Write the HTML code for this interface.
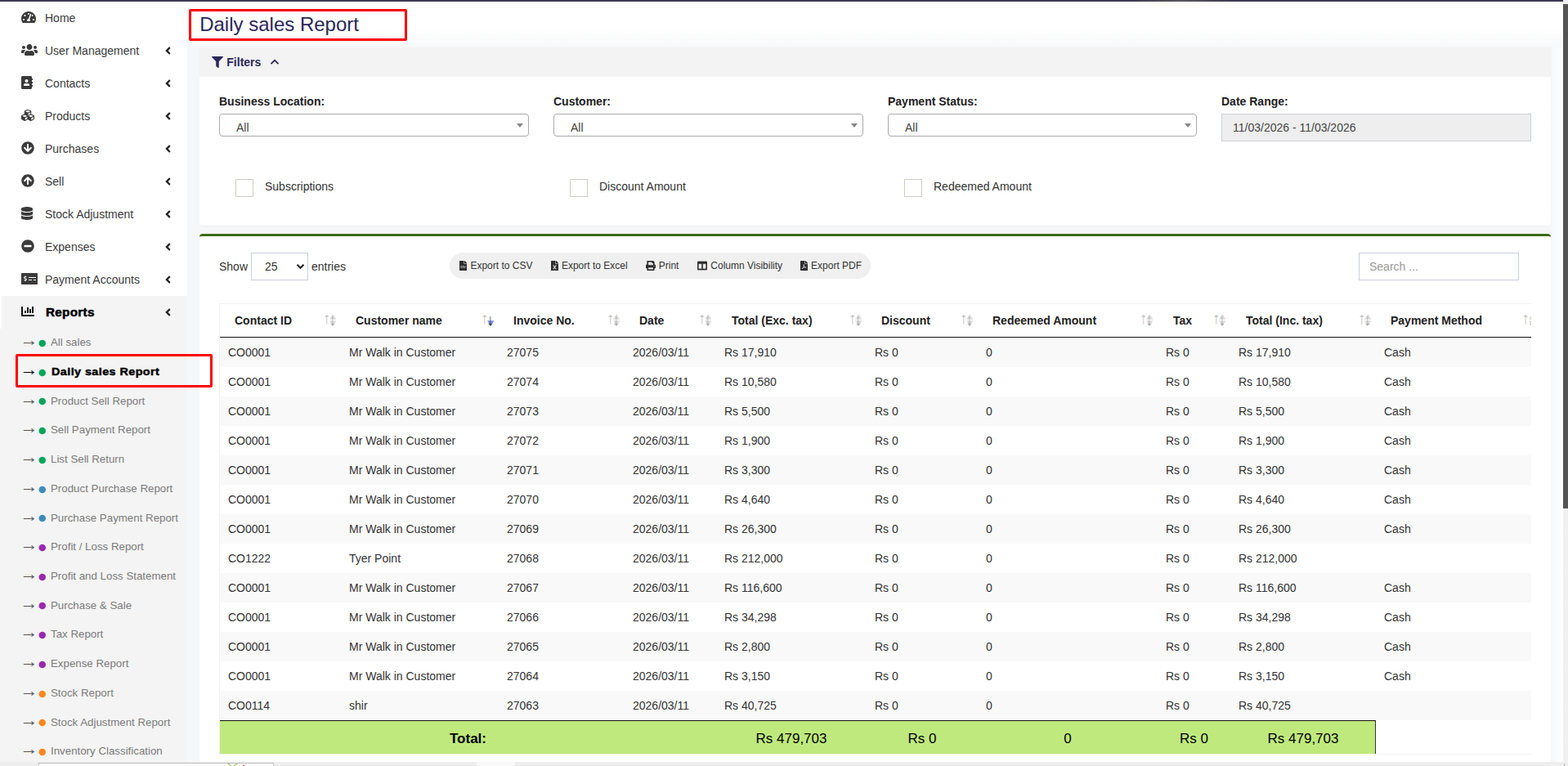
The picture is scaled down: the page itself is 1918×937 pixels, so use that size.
<!DOCTYPE html>
<html lang="en">
<head>
<meta charset="utf-8">
<title>Daily sales Report</title>
<style>
*{box-sizing:border-box}
html,body{margin:0;padding:0}
body{width:1918px;height:937px;overflow:hidden;position:relative;background:#f6f7f9;font-family:"Liberation Sans",Arial,sans-serif;font-size:14px;line-height:20px;color:#333}
.abs{position:absolute}
#topbar{left:0;top:0;width:1912px;height:2px;background:#3d3b50}
#glow{left:1385px;top:0;width:120px;height:12px;background:radial-gradient(ellipse at 50% 0,rgba(255,232,150,.16),rgba(255,240,170,0) 70%)}
#rgrad{left:1897px;top:58px;width:15px;height:875px;background:linear-gradient(90deg,#f6f7f9,#fff)}
#titlebg{left:229px;top:2px;width:1683px;height:56px;background:linear-gradient(#fff 0,#fff 60%,#f7f8fa 100%)}
#sbar{left:1912px;top:0;width:6px;height:933px;background:#f0f0f0}
#sthumb{left:1912px;top:5px;width:6px;height:617px;background:#555}
#bottom{left:0;top:932px;width:1918px;height:5px;background:#eee}
#bottombox{left:47px;top:933px;width:288px;height:4px;background:#fff;border:1px solid #bdbdbd;border-bottom:0;overflow:hidden}
#side{left:0;top:2px;width:229px;height:931px;background:#fff}
#subbg{left:0;top:402px;width:229px;height:531px;background:#f4f4f4}
#repbg{left:2px;top:362px;width:227px;height:40px;background:#f4f4f4}
.mi{left:0;width:229px;height:40px;line-height:40px;color:#3b3b3b;font-size:14px;white-space:nowrap}
.mi .t{position:absolute;left:55px;top:0}
.mi svg.ic{position:absolute;left:26px;top:11px;height:16px;fill:#3b3b3b}
.mi.b svg.ic{fill:#111}
.mi svg.ch{position:absolute;left:201.6px;top:12.6px;width:7px;height:14px;overflow:visible}
.mi.b .t{font-weight:bold;color:#000;left:56.3px;-webkit-text-stroke:.5px #000;letter-spacing:.3px;transform:scaleX(1.085);transform-origin:0 50%}
.si{left:0;width:229px;height:20px;line-height:20px;color:#7b7b7b;font-size:13.3px;white-space:nowrap}
.si .ar{position:absolute;left:24.5px;top:-2.7px;color:#555;font-size:22px;line-height:20px}
.si svg.dot{position:absolute;left:47px;top:6px;width:10px;height:10px}
.si .t{position:absolute;left:62px;top:.3px}
.si.b .t{font-weight:bold;color:#000;left:63.4px;-webkit-text-stroke:.45px #000;letter-spacing:.4px;transform:scaleX(1.08);transform-origin:0 50%}
.si.b .ar{color:#000}
#red1{left:231px;top:11px;width:267px;height:39px;border:3px solid #f00;border-radius:2px}
#red2{left:19px;top:433px;width:241px;height:41px;border:3px solid #f00;border-radius:2px}
#title{left:244.2px;top:14px;font-size:24px;line-height:32px;color:#2a2859;white-space:nowrap}
.box{background:#fff}
#fbox{left:244px;top:58px;width:1653px;height:218px;border-radius:0 0 4px 4px;box-shadow:0 1px 2px rgba(0,0,0,.04)}
#fhead{left:244px;top:58px;width:1653px;height:36px;background:#f3f3f3}
#ftitle{left:277.3px;top:66px;font-weight:bold;color:#2a2859;white-space:nowrap}
.lbl{font-weight:bold;color:#222;white-space:nowrap;top:114px}
.s2{top:139px;width:379px;height:28px;border:1px solid #aaa;border-radius:4px;background:#fff}
.s2 .t{position:absolute;left:20px;top:6px;color:#444;line-height:20px}
.s2 .a{position:absolute;right:6px;top:11px;width:0;height:0;border-left:4px solid transparent;border-right:4px solid transparent;border-top:5px solid #888}
#dr{left:1494px;top:139px;width:379px;height:34px;border:1px solid #ccd0d7;background:#eee;color:#444;padding:6px 13px;line-height:20px;white-space:nowrap}
.cb{top:219px;width:22px;height:22px;border:1px solid #d0cdc6;background:#fff}
.cbl{top:218px;color:#333;white-space:nowrap}
#tbox{left:244px;top:286px;width:1653px;height:660px;border-top:3px solid #3d6b17;border-radius:4px 4px 0 0}
#show{left:268px;top:316px;white-space:nowrap}
#sel{left:307px;top:309px;width:70px;height:34px;border:1px solid #c9cfdc;background:#fff}
#sel .t{position:absolute;left:16px;top:6px;color:#333}
#sel svg{position:absolute;left:54.2px;top:11px;width:11px;height:10px}
#entries{left:381px;top:316px;white-space:nowrap}
#btns{left:550px;top:309px;width:515px;height:32px;border-radius:16px;background:#f0f0f0}
.bt{top:317px;font-size:12px;line-height:16px;color:#333;white-space:nowrap}
.bt svg{position:absolute;top:1.5px;height:12px;fill:#2e2e2e;stroke:#2e2e2e;stroke-width:10}
#search{left:1662px;top:309px;width:196px;height:34px;border:1px solid #c9cfdc;background:#fff;color:#999;padding:6px 12px;line-height:20px}
#tbl{left:268px;top:371px;width:1605px;height:552px;overflow:hidden;border:1px solid #f2f2f2;border-width:1px 0 1px 1px}
#thline{left:269px;top:412px;width:1604px;height:1px;background:#111;box-shadow:0 1px 0 #fff}
.th{font-weight:bold;color:#222;white-space:nowrap}
.row{left:269px;width:1604px;height:36px}
.row.o{background:#f9f9f9}
.td{color:#333;white-space:nowrap;line-height:20px}
#foot{left:269px;top:881px;width:1414px;height:41px;background:#bfe97c;border-top:1px solid #111;border-right:1px solid #333}
.ft{top:894px;font-size:17px;line-height:20px;color:#000;white-space:nowrap;text-align:center}
.sa{font-size:20px;line-height:20px;color:#222;opacity:.28}
.sa.on{opacity:.8;color:#333}
</style>
</head>
<body>
<div class="abs" id="titlebg"></div>
<div class="abs" id="rgrad"></div>
<div class="abs" id="topbar"></div>
<div class="abs" id="glow"></div>
<div class="abs" id="side"></div>
<div class="abs" id="subbg"></div>
<div class="abs" id="repbg"></div>
<div class="abs mi" style="top:2px"><svg class="ic" style="width:18px" viewBox="0 0 576 512"><path d="M288 32C128.94 32 0 160.94 0 320c0 52.8 14.25 102.26 39.06 144.8 5.61 9.62 16.3 15.2 27.44 15.2h443c11.14 0 21.83-5.58 27.44-15.2C561.75 422.26 576 372.8 576 320c0-159.06-128.94-288-288-288zm0 64c14.71 0 26.58 10.13 30.32 23.65-1.11 2.26-2.64 4.23-3.45 6.67l-9.22 27.67c-5.13 3.49-10.97 6.01-17.64 6.01-17.67 0-32-14.33-32-32S270.33 96 288 96zM96 384c-17.67 0-32-14.33-32-32s14.33-32 32-32 32 14.33 32 32-14.33 32-32 32zm48-160c-17.67 0-32-14.33-32-32s14.33-32 32-32 32 14.33 32 32-14.33 32-32 32zm246.77-72.41l-61.33 184C343.13 347.33 352 364.54 352 384c0 11.72-3.38 22.55-8.88 32H232.88c-5.5-9.45-8.88-20.28-8.88-32 0-33.94 26.5-61.43 59.9-63.59l61.34-184.01c4.17-12.56 17.73-19.45 30.36-15.17 12.57 4.19 19.35 17.79 15.17 30.36zm14.66 57.2l15.52-46.55c3.47-1.29 7.13-2.23 11.05-2.23 17.67 0 32 14.33 32 32s-14.33 32-32 32c-11.38-.01-20.89-6.28-26.57-15.22zM480 384c-17.67 0-32-14.33-32-32s14.33-32 32-32 32 14.33 32 32-14.33 32-32 32z"/></svg><span class="t">Home</span></div>
<div class="abs mi" style="top:42px"><svg class="ic" style="width:20px" viewBox="0 0 640 512"><path d="M96 224c35.3 0 64-28.7 64-64s-28.7-64-64-64-64 28.7-64 64 28.7 64 64 64zm448 0c35.3 0 64-28.7 64-64s-28.7-64-64-64-64 28.7-64 64 28.7 64 64 64zm32 32h-64c-17.6 0-33.5 7.1-45.1 18.6 40.3 22.1 68.9 62 75.1 109.4h66c17.7 0 32-14.3 32-32v-32c0-35.3-28.7-64-64-64zm-256 0c61.9 0 112-50.1 112-112S381.9 32 320 32 208 82.1 208 144s50.1 112 112 112zm76.8 32h-8.3c-20.8 10-43.9 16-68.5 16s-47.6-6-68.5-16h-8.3C179.6 288 128 339.6 128 403.2V432c0 26.5 21.5 48 48 48h288c26.5 0 48-21.5 48-48v-28.8c0-63.6-51.6-115.2-115.2-115.2zm-223.700-13.400C161.5 263.1 145.6 256 128 256H64c-35.3 0-64 28.7-64 64v32c0 17.7 14.3 32 32 32h65.9c6.3-47.4 34.9-87.300 75.200-109.400z"/></svg><span class="t">User Management</span><svg class="ch" viewBox="0 0 256 512"><path d="M31.7 239l136-136c9.4-9.4 24.6-9.4 33.9 0l22.6 22.6c9.4 9.4 9.4 24.6 0 33.9L127.9 256l96.4 96.4c9.4 9.4 9.4 24.6 0 33.900L201.7 409c-9.400 9.4-24.6 9.4-33.900 0l-136-136c-9.500-9.400-9.500-24.600-.1-34z" fill="#222" stroke="#222" stroke-width="8"/></svg></div>
<div class="abs mi" style="top:82px"><svg class="ic" style="width:14px" viewBox="0 0 448 512"><path d="M436 160c6.6 0 12-5.4 12-12v-40c0-6.6-5.4-12-12-12h-20V48c0-26.5-21.5-48-48-48H48C21.5 0 0 21.5 0 48v416c0 26.5 21.5 48 48 48h320c26.5 0 48-21.5 48-48v-48h20c6.6 0 12-5.4 12-12v-40c0-6.6-5.4-12-12-12h-20v-64h20c6.6 0 12-5.4 12-12v-40c0-6.6-5.4-12-12-12h-20v-64h20zm-228-32c35.3 0 64 28.7 64 64s-28.7 64-64 64-64-28.7-64-64 28.7-64 64-64zm112 236.800c0 10.6-10 19.2-22.4 19.200H118.400C106 384 96 375.400 96 364.800v-19.200c0-31.800 30.100-57.600 67.200-57.600h5c12.300 5.100 25.700 8 39.800 8s27.600-2.900 39.800-8h5c37.100 0 67.200 25.800 67.200 57.600v19.200z"/></svg><span class="t">Contacts</span><svg class="ch" viewBox="0 0 256 512"><path d="M31.7 239l136-136c9.4-9.4 24.6-9.4 33.9 0l22.6 22.6c9.4 9.4 9.4 24.6 0 33.9L127.9 256l96.4 96.4c9.4 9.4 9.4 24.6 0 33.900L201.7 409c-9.400 9.4-24.6 9.4-33.900 0l-136-136c-9.500-9.400-9.500-24.600-.1-34z" fill="#222" stroke="#222" stroke-width="8"/></svg></div>
<div class="abs mi" style="top:122px"><svg class="ic" style="width:16px" viewBox="0 0 512 512"><path d="M488.6 250.200L392 214V105.500c0-15-9.300-28.400-23.400-33.700l-100-37.500c-8.100-3.100-17.100-3.100-25.300 0l-100 37.500c-14.100 5.300-23.400 18.700-23.400 33.700V214l-96.600 36.200C9.300 255.500 0 268.900 0 283.900V394c0 13.600 7.700 26.100 19.900 32.200l100 50c10.100 5.100 22.100 5.100 32.200 0l103.900-52 103.900 52c10.100 5.100 22.100 5.100 32.200 0l100-50c12.200-6.100 19.900-18.600 19.900-32.200V283.900c0-15-9.300-28.400-23.400-33.700zM358 214.800l-85 31.900v-68.200l85-37v73.300zM154 104.100l102-38.200 102 38.200v.6l-102 41.400-102-41.400v-.6zm84 291.100l-85 42.500v-79.100l85-38.800v75.400zm0-112l-102 41.400-102-41.400v-.6l102-38.200 102 38.200v.6zm240 112l-85 42.500v-79.100l85-38.800v75.400zm0-112l-102 41.400-102-41.400v-.6l102-38.200 102 38.200v.6z"/></svg><span class="t">Products</span><svg class="ch" viewBox="0 0 256 512"><path d="M31.7 239l136-136c9.4-9.4 24.6-9.4 33.9 0l22.6 22.6c9.4 9.4 9.4 24.6 0 33.9L127.9 256l96.4 96.4c9.4 9.4 9.4 24.6 0 33.900L201.7 409c-9.400 9.4-24.6 9.4-33.900 0l-136-136c-9.500-9.400-9.500-24.600-.1-34z" fill="#222" stroke="#222" stroke-width="8"/></svg></div>
<div class="abs mi" style="top:162px"><svg class="ic" style="width:16px" viewBox="0 0 512 512"><path d="M504 256c0 137-111 248-248 248S8 393 8 256 119 8 256 8s248 111 248 248zm-143.600-28.900L288 302.600V120c0-13.300-10.700-24-24-24h-16c-13.300 0-24 10.700-24 24v182.600l-72.400-75.500c-9.300-9.700-24.800-9.900-34.300-.4l-10.900 11c-9.400 9.400-9.400 24.600 0 33.900L239 404.300c9.400 9.400 24.600 9.400 33.900 0l132.700-132.700c9.400-9.400 9.400-24.600 0-33.900l-10.900-11c-9.500-9.500-25-9.300-34.300.4z"/></svg><span class="t">Purchases</span><svg class="ch" viewBox="0 0 256 512"><path d="M31.7 239l136-136c9.4-9.4 24.6-9.4 33.9 0l22.6 22.6c9.4 9.4 9.4 24.6 0 33.9L127.9 256l96.4 96.4c9.4 9.4 9.4 24.6 0 33.900L201.7 409c-9.400 9.4-24.6 9.4-33.900 0l-136-136c-9.500-9.400-9.500-24.600-.1-34z" fill="#222" stroke="#222" stroke-width="8"/></svg></div>
<div class="abs mi" style="top:202px"><svg class="ic" style="width:16px" viewBox="0 0 512 512"><path d="M8 256C8 119 119 8 256 8s248 111 248 248-111 248-248 248S8 393 8 256zm143.600 28.900l72.400-75.500V392c0 13.300 10.700 24 24 24h16c13.300 0 24-10.700 24-24V209.400l72.400 75.500c9.300 9.700 24.800 9.900 34.300.4l10.900-11c9.400-9.400 9.400-24.600 0-33.900L273 107.700c-9.400-9.400-24.600-9.400-33.900 0L106.300 240.400c-9.400 9.400-9.400 24.600 0 33.900l10.900 11c9.600 9.500 25.100 9.300 34.400-.4z"/></svg><span class="t">Sell</span><svg class="ch" viewBox="0 0 256 512"><path d="M31.7 239l136-136c9.4-9.4 24.6-9.4 33.9 0l22.6 22.6c9.4 9.4 9.4 24.6 0 33.9L127.9 256l96.4 96.4c9.4 9.4 9.4 24.6 0 33.900L201.7 409c-9.400 9.4-24.6 9.4-33.900 0l-136-136c-9.500-9.400-9.500-24.600-.1-34z" fill="#222" stroke="#222" stroke-width="8"/></svg></div>
<div class="abs mi" style="top:242px"><svg class="ic" style="width:14px" viewBox="0 0 448 512"><path d="M448 73.143v45.714C448 159.143 347.667 192 224 192S0 159.143 0 118.857V73.143C0 32.857 100.333 0 224 0s224 32.857 224 73.143zM448 176v102.857C448 319.143 347.667 352 224 352S0 319.143 0 278.857V176c48.125 33.143 136.208 48.572 224 48.572S399.874 209.143 448 176zm0 160v102.857C448 479.143 347.667 512 224 512S0 479.143 0 438.857V336c48.125 33.143 136.208 48.572 224 48.572S399.874 369.143 448 336z"/></svg><span class="t">Stock Adjustment</span><svg class="ch" viewBox="0 0 256 512"><path d="M31.7 239l136-136c9.4-9.4 24.6-9.4 33.9 0l22.6 22.6c9.4 9.4 9.4 24.6 0 33.9L127.9 256l96.4 96.4c9.4 9.4 9.4 24.6 0 33.900L201.7 409c-9.400 9.4-24.6 9.4-33.900 0l-136-136c-9.500-9.400-9.500-24.600-.1-34z" fill="#222" stroke="#222" stroke-width="8"/></svg></div>
<div class="abs mi" style="top:282px"><svg class="ic" style="width:16px" viewBox="0 0 512 512"><path d="M256 8C119 8 8 119 8 256s111 248 248 248 248-111 248-248S393 8 256 8zM124 296c-6.6 0-12-5.4-12-12v-56c0-6.6 5.4-12 12-12h264c6.6 0 12 5.4 12 12v56c0 6.6-5.4 12-12 12H124z"/></svg><span class="t">Expenses</span><svg class="ch" viewBox="0 0 256 512"><path d="M31.7 239l136-136c9.4-9.4 24.6-9.4 33.9 0l22.6 22.6c9.4 9.4 9.4 24.6 0 33.9L127.9 256l96.4 96.4c9.4 9.4 9.4 24.6 0 33.900L201.7 409c-9.400 9.4-24.6 9.4-33.900 0l-136-136c-9.500-9.400-9.500-24.600-.1-34z" fill="#222" stroke="#222" stroke-width="8"/></svg></div>
<div class="abs mi" style="top:322px"><svg class="ic" style="width:20px" viewBox="0 0 640 512"><path d="M608 32H32C14.33 32 0 46.33 0 64v384c0 17.67 14.33 32 32 32h576c17.67 0 32-14.33 32-32V64c0-17.67-14.33-32-32-32zM176 327.88V344c0 4.42-3.58 8-8 8h-16c-4.42 0-8-3.58-8-8v-16.29c-11.29-.58-22.27-4.52-31.37-11.35-3.9-2.93-4.1-8.77-.57-12.14l11.75-11.21c2.77-2.64 6.89-2.76 10.13-.73 3.870 2.42 8.26 3.72 12.82 3.72h28.11c6.5 0 11.8-5.92 11.8-13.19 0-5.95-3.61-11.19-8.77-12.73l-45-13.5c-18.59-5.58-31.58-23.42-31.58-43.39 0-24.52 19.05-44.44 42.67-45.07V152c0-4.42 3.58-8 8-8h16c4.42 0 8 3.58 8 8v16.29c11.29.58 22.27 4.51 31.37 11.35 3.9 2.93 4.1 8.77.57 12.14l-11.75 11.21c-2.77 2.64-6.89 2.76-10.13.73-3.870-2.43-8.26-3.72-12.82-3.72h-28.11c-6.5 0-11.8 5.92-11.8 13.19 0 5.95 3.61 11.19 8.77 12.73l45 13.5c18.59 5.58 31.58 23.42 31.58 43.39 0 24.53-19.05 44.44-42.67 45.07zM416 312c0 4.42-3.58 8-8 8H296c-4.42 0-8-3.58-8-8v-16c0-4.42 3.58-8 8-8h112c4.42 0 8 3.58 8 8v16zm160 0c0 4.42-3.58 8-8 8h-80c-4.42 0-8-3.58-8-8v-16c0-4.42 3.58-8 8-8h80c4.42 0 8 3.58 8 8v16zm0-96c0 4.42-3.58 8-8 8H296c-4.42 0-8-3.58-8-8v-16c0-4.42 3.58-8 8-8h272c4.42 0 8 3.58 8 8v16z"/></svg><span class="t">Payment Accounts</span><svg class="ch" viewBox="0 0 256 512"><path d="M31.7 239l136-136c9.4-9.4 24.6-9.4 33.9 0l22.6 22.6c9.4 9.4 9.4 24.6 0 33.9L127.9 256l96.4 96.4c9.4 9.4 9.4 24.6 0 33.900L201.7 409c-9.400 9.4-24.6 9.4-33.900 0l-136-136c-9.500-9.400-9.500-24.600-.1-34z" fill="#222" stroke="#222" stroke-width="8"/></svg></div>
<div class="abs mi b" style="top:362px"><svg class="ic" style="width:16px" viewBox="0 0 512 512"><path d="M332.8 320h38.4c6.4 0 12.8-6.4 12.8-12.8V172.800c0-6.4-6.4-12.8-12.8-12.8h-38.4c-6.4 0-12.8 6.4-12.8 12.8v134.400c0 6.4 6.4 12.8 12.8 12.8zm96 0h38.4c6.4 0 12.8-6.4 12.8-12.8V76.800c0-6.4-6.4-12.8-12.8-12.8h-38.400c-6.4 0-12.8 6.4-12.8 12.8v230.400c0 6.4 6.4 12.8 12.8 12.8zm-288 0h38.400c6.4 0 12.8-6.4 12.8-12.8v-70.400c0-6.4-6.4-12.8-12.8-12.8h-38.400c-6.4 0-12.8 6.4-12.8 12.8v70.400c0 6.4 6.4 12.8 12.8 12.8zm96 0h38.400c6.4 0 12.8-6.4 12.8-12.8V108.800c0-6.4-6.4-12.8-12.8-12.8h-38.400c-6.4 0-12.8 6.4-12.8 12.8v198.400c0 6.4 6.4 12.8 12.8 12.8zM496 384H64V80c0-8.84-7.16-16-16-16H16C7.16 64 0 71.16 0 80v336c0 17.67 14.33 32 32 32h464c8.84 0 16-7.16 16-16v-32c0-8.84-7.16-16-16-16z"/></svg><span class="t">Reports</span><svg class="ch" viewBox="0 0 256 512"><path d="M31.7 239l136-136c9.4-9.4 24.6-9.4 33.9 0l22.6 22.6c9.4 9.4 9.4 24.6 0 33.9L127.9 256l96.4 96.4c9.4 9.4 9.4 24.6 0 33.900L201.7 409c-9.400 9.4-24.6 9.4-33.900 0l-136-136c-9.500-9.400-9.500-24.600-.1-34z" fill="#222" stroke="#222" stroke-width="8"/></svg></div>
<div class="abs si" style="top:409.00px"><span class="ar">→</span><svg class="dot" viewBox="0 0 10 10"><circle cx="4.75" cy="4.9" r="4.25" fill="#00a65a"/></svg><span class="t">All sales</span></div>
<div class="abs si b" style="top:444.71px"><span class="ar">→</span><svg class="dot" viewBox="0 0 10 10"><circle cx="4.75" cy="4.9" r="4.25" fill="#00a65a"/></svg><span class="t">Daily sales Report</span></div>
<div class="abs si" style="top:480.43px"><span class="ar">→</span><svg class="dot" viewBox="0 0 10 10"><circle cx="4.75" cy="4.9" r="4.25" fill="#00a65a"/></svg><span class="t">Product Sell Report</span></div>
<div class="abs si" style="top:516.14px"><span class="ar">→</span><svg class="dot" viewBox="0 0 10 10"><circle cx="4.75" cy="4.9" r="4.25" fill="#00a65a"/></svg><span class="t">Sell Payment Report</span></div>
<div class="abs si" style="top:551.86px"><span class="ar">→</span><svg class="dot" viewBox="0 0 10 10"><circle cx="4.75" cy="4.9" r="4.25" fill="#00a65a"/></svg><span class="t">List Sell Return</span></div>
<div class="abs si" style="top:587.57px"><span class="ar">→</span><svg class="dot" viewBox="0 0 10 10"><circle cx="4.75" cy="4.9" r="4.25" fill="#3c8dbc"/></svg><span class="t">Product Purchase Report</span></div>
<div class="abs si" style="top:623.28px"><span class="ar">→</span><svg class="dot" viewBox="0 0 10 10"><circle cx="4.75" cy="4.9" r="4.25" fill="#3c8dbc"/></svg><span class="t">Purchase Payment Report</span></div>
<div class="abs si" style="top:659.00px"><span class="ar">→</span><svg class="dot" viewBox="0 0 10 10"><circle cx="4.75" cy="4.9" r="4.25" fill="#9c27b0"/></svg><span class="t">Profit / Loss Report</span></div>
<div class="abs si" style="top:694.71px"><span class="ar">→</span><svg class="dot" viewBox="0 0 10 10"><circle cx="4.75" cy="4.9" r="4.25" fill="#9c27b0"/></svg><span class="t">Profit and Loss Statement</span></div>
<div class="abs si" style="top:730.43px"><span class="ar">→</span><svg class="dot" viewBox="0 0 10 10"><circle cx="4.75" cy="4.9" r="4.25" fill="#9c27b0"/></svg><span class="t">Purchase &amp; Sale</span></div>
<div class="abs si" style="top:766.14px"><span class="ar">→</span><svg class="dot" viewBox="0 0 10 10"><circle cx="4.75" cy="4.9" r="4.25" fill="#9c27b0"/></svg><span class="t">Tax Report</span></div>
<div class="abs si" style="top:801.85px"><span class="ar">→</span><svg class="dot" viewBox="0 0 10 10"><circle cx="4.75" cy="4.9" r="4.25" fill="#9c27b0"/></svg><span class="t">Expense Report</span></div>
<div class="abs si" style="top:837.57px"><span class="ar">→</span><svg class="dot" viewBox="0 0 10 10"><circle cx="4.75" cy="4.9" r="4.25" fill="#ff851b"/></svg><span class="t">Stock Report</span></div>
<div class="abs si" style="top:873.28px"><span class="ar">→</span><svg class="dot" viewBox="0 0 10 10"><circle cx="4.75" cy="4.9" r="4.25" fill="#ff851b"/></svg><span class="t">Stock Adjustment Report</span></div>
<div class="abs si" style="top:909.00px"><span class="ar">→</span><svg class="dot" viewBox="0 0 10 10"><circle cx="4.75" cy="4.9" r="4.25" fill="#ff851b"/></svg><span class="t">Inventory Classification</span></div>
<div class="abs" id="title">Daily sales Report</div>
<div class="abs box" id="fbox"></div>
<div class="abs" id="fhead"></div>
<svg class="abs" style="left:259px;top:69px;width:14px;height:14px" viewBox="0 0 512 512"><path d="M487.976 0H24.028C2.71 0-8.047 25.866 7.058 40.971L192 225.941V432c0 7.831 3.821 15.17 10.237 19.662l80 55.98C298.02 518.69 320 507.493 320 487.98V225.941l184.947-184.97C520.021 25.896 509.338 0 487.976 0z" fill="#2a2859"/></svg>
<div class="abs" id="ftitle">Filters</div>
<svg class="abs" style="left:330px;top:71px;width:12px;height:9px" viewBox="0 0 12 9"><path d="M1.5 7.2 L6 2.7 L10.5 7.2" fill="none" stroke="#2a2859" stroke-width="1.8"/></svg>
<div class="abs lbl" style="left:268px">Business Location:</div>
<div class="abs s2" style="left:268px"><span class="t">All</span><span class="a"></span></div>
<div class="abs lbl" style="left:677px">Customer:</div>
<div class="abs s2" style="left:677px"><span class="t">All</span><span class="a"></span></div>
<div class="abs lbl" style="left:1086px">Payment Status:</div>
<div class="abs s2" style="left:1086px;width:378px"><span class="t">All</span><span class="a"></span></div>
<div class="abs lbl" style="left:1494px">Date Range:</div>
<div class="abs" id="dr">11/03/2026 - 11/03/2026</div>
<div class="abs cb" style="left:288px"></div><div class="abs cbl" style="left:324px">Subscriptions</div>
<div class="abs cb" style="left:697px"></div><div class="abs cbl" style="left:733px">Discount Amount</div>
<div class="abs cb" style="left:1106px"></div><div class="abs cbl" style="left:1142px">Redeemed Amount</div>
<div class="abs box" id="tbox"></div>
<div class="abs" id="show">Show</div>
<div class="abs" id="sel"><span class="t">25</span><svg viewBox="0 0 11 10"><path d="M1.5 2.7 L5.5 6.8 L9.5 2.7" fill="none" stroke="#222" stroke-width="2"/></svg></div>
<div class="abs" id="entries">entries</div>
<div class="abs" id="btns"></div>
<div class="abs bt" style="left:562.3px;padding-left:13.1px"><svg style="left:0;width:9px" viewBox="0 0 384 512"><path d="M224 136V0H24C10.7 0 0 10.7 0 24v464c0 13.3 10.7 24 24 24h336c13.3 0 24-10.7 24-24V160H248c-13.2 0-24-10.8-24-24zm-96 144c0 4.42-3.58 8-8 8h-8c-8.84 0-16 7.16-16 16v32c0 8.84 7.16 16 16 16h8c4.42 0 8 3.58 8 8v16c0 4.42-3.58 8-8 8h-8c-26.51 0-48-21.49-48-48v-32c0-26.51 21.49-48 48-48h8c4.42 0 8 3.58 8 8v16zm44.27 104H160c-4.42 0-8-3.58-8-8v-16c0-4.42 3.58-8 8-8h12.27c5.95 0 10.41-3.5 10.41-6.62 0-1.3-.75-2.66-2.12-3.84l-21.89-18.77c-8.47-7.22-13.33-17.48-13.33-28.14 0-21.3 19.02-38.62 42.41-38.62H200c4.42 0 8 3.58 8 8v16c0 4.42-3.58 8-8 8h-12.27c-5.95 0-10.41 3.5-10.41 6.62 0 1.3.75 2.66 2.12 3.84l21.89 18.77c8.47 7.22 13.33 17.48 13.33 28.14.01 21.29-19 38.620-42.390 38.620zM256 264v20.800c0 20.27 5.7 40.17 16 56.88 10.3-16.7 16-36.61 16-56.88V264c0-4.42 3.58-8 8-8h16c4.42 0 8 3.58 8 8v20.800c0 35.48-12.88 68.89-36.28 94.09-3.02 3.25-7.27 5.11-11.72 5.11s-8.7-1.86-11.72-5.11c-23.4-25.2-36.28-58.61-36.28-94.09V264c0-4.42 3.58-8 8-8h16c4.42 0 8 3.58 8 8zm121-159L279.100 7c-4.500-4.500-10.600-7-17-7H256v128h128v-6.100c0-6.300-2.500-12.400-7-16.900z"/></svg>Export to CSV</div>
<div class="abs bt" style="left:673.9px;padding-left:13px"><svg style="left:0;width:9px" viewBox="0 0 384 512"><path d="M224 136V0H24C10.7 0 0 10.7 0 24v464c0 13.3 10.7 24 24 24h336c13.3 0 24-10.7 24-24V160H248c-13.2 0-24-10.8-24-24zm60.100 106.500L224 336l60.100 93.500c5.100 8-.6 18.500-10.100 18.500h-34.900c-4.400 0-8.500-2.400-10.600-6.300C208.900 405.500 192 373 192 373c-6.400 14.800-10 20-36.600 68.800-2.100 3.900-6.100 6.300-10.500 6.300H110c-9.500 0-15.200-10.500-10.100-18.500l60.300-93.500-60.300-93.500c-5.200-8 .6-18.500 10.100-18.500h34.800c4.400 0 8.500 2.400 10.600 6.300 26.100 48.800 20 33.600 36.600 68.500 0 0 6.100-11.700 36.600-68.500 2.100-3.900 6.200-6.300 10.600-6.300H274c9.500-.1 15.200 10.400 10.100 18.400zM384 121.900v6.100H256V0h6.100c6.400 0 12.500 2.500 17 7l97.900 98c4.500 4.500 7 10.600 7 16.900z"/></svg>Export to Excel</div>
<div class="abs bt" style="left:790.2px;padding-left:15.6px"><svg style="left:0;width:12px" viewBox="0 0 512 512"><path d="M448 192V77.25c0-8.49-3.37-16.62-9.37-22.63L393.370 9.370c-6-6-14.140-9.370-22.630-9.370H96C78.330 0 64 14.330 64 32v160c-35.350 0-64 28.650-64 64v112c0 8.840 7.160 16 16 16h48v96c0 17.670 14.330 32 32 32h320c17.670 0 32-14.330 32-32v-96h48c8.840 0 16-7.160 16-16V256c0-35.350-28.650-64-64-64zm-64 256H128v-96h256v96zm0-224H128V64h192v48c0 8.840 7.160 16 16 16h48v96zm48 72c-13.250 0-24-10.750-24-24 0-13.260 10.750-24 24-24s24 10.740 24 24c0 13.250-10.750 24-24 24z"/></svg>Print</div>
<div class="abs bt" style="left:853px;padding-left:16.3px"><svg style="left:0;width:12px" viewBox="0 0 512 512"><path d="M464 32H48C21.490 32 0 53.490 0 80v352c0 26.510 21.490 48 48 48h416c26.510 0 48-21.490 48-48V80c0-26.510-21.490-48-48-48zM224 416H64V160h160v256zm224 0H288V160h160v256z"/></svg>Column Visibility</div>
<div class="abs bt" style="left:979px;padding-left:13.1px"><svg style="left:0;width:9px" viewBox="0 0 384 512"><path d="M224 136V0H24C10.7 0 0 10.7 0 24v464c0 13.3 10.7 24 24 24h336c13.3 0 24-10.7 24-24V160H248c-13.2 0-24-10.8-24-24zm160-14.100v6.100H256V0h6.100c6.400 0 12.500 2.500 17 7l97.900 98c4.500 4.500 7 10.600 7 16.900z"/><path d="M95 420c30-15 60-50 85-110 15-40 25-80 15-105-8-18-30-15-34 5-6 30 20 90 60 125 30 25 65 30 75 15 10-18-25-30-80-20-50 10-100 35-121 60-15 20 0 30 0 30z" fill="none" stroke="#f0f0f0" stroke-width="26"/></svg>Export PDF</div>
<div class="abs" id="search">Search ...</div>
<div class="abs" id="tbl"></div>
<div class="abs" id="thead" style="left:269px;top:372px;width:1604px;height:39px;overflow:hidden">
<div class="abs th" style="left:18px;top:10px">Contact ID</div><div class="abs" style="left:-269px;top:-372px;width:0;height:0"><svg class="abs" style="left:403.3px;top:384px;width:8.4px;height:15px" viewBox="0 0 8.4 15"><path d="M4.2 0L8.4 6.8H0zM0 8.2h8.4L4.2 15z" fill="#dddddd"/></svg><span class="abs sa" style="left:394.4px;top:379.2px">↑</span><span class="abs sa" style="left:401.6px;top:381.3px">↓</span></div>
<div class="abs th" style="left:166px;top:10px">Customer name</div><div class="abs" style="left:-269px;top:-372px;width:0;height:0"><svg class="abs" style="left:596.3px;top:384px;width:8.4px;height:15px" viewBox="0 0 8.4 15"><path d="M0 8.2h8.4L4.2 15z" fill="#6b7fe0" opacity=".9"/></svg><span class="abs sa" style="left:587.4px;top:379.2px">↑</span><span class="abs sa on" style="left:594.6px;top:381.3px">↓</span></div>
<div class="abs th" style="left:359px;top:10px">Invoice No.</div><div class="abs" style="left:-269px;top:-372px;width:0;height:0"><svg class="abs" style="left:750.3px;top:384px;width:8.4px;height:15px" viewBox="0 0 8.4 15"><path d="M4.2 0L8.4 6.8H0zM0 8.2h8.4L4.2 15z" fill="#dddddd"/></svg><span class="abs sa" style="left:741.4px;top:379.2px">↑</span><span class="abs sa" style="left:748.6px;top:381.3px">↓</span></div>
<div class="abs th" style="left:513px;top:10px">Date</div><div class="abs" style="left:-269px;top:-372px;width:0;height:0"><svg class="abs" style="left:862.3px;top:384px;width:8.4px;height:15px" viewBox="0 0 8.4 15"><path d="M4.2 0L8.4 6.8H0zM0 8.2h8.4L4.2 15z" fill="#dddddd"/></svg><span class="abs sa" style="left:853.4px;top:379.2px">↑</span><span class="abs sa" style="left:860.6px;top:381.3px">↓</span></div>
<div class="abs th" style="left:626px;top:10px">Total (Exc. tax)</div><div class="abs" style="left:-269px;top:-372px;width:0;height:0"><svg class="abs" style="left:1046.3px;top:384px;width:8.4px;height:15px" viewBox="0 0 8.4 15"><path d="M4.2 0L8.4 6.8H0zM0 8.2h8.4L4.2 15z" fill="#dddddd"/></svg><span class="abs sa" style="left:1037.4px;top:379.2px">↑</span><span class="abs sa" style="left:1044.6px;top:381.3px">↓</span></div>
<div class="abs th" style="left:809px;top:10px">Discount</div><div class="abs" style="left:-269px;top:-372px;width:0;height:0"><svg class="abs" style="left:1182.3px;top:384px;width:8.4px;height:15px" viewBox="0 0 8.4 15"><path d="M4.2 0L8.4 6.8H0zM0 8.2h8.4L4.2 15z" fill="#dddddd"/></svg><span class="abs sa" style="left:1173.4px;top:379.2px">↑</span><span class="abs sa" style="left:1180.6px;top:381.3px">↓</span></div>
<div class="abs th" style="left:945px;top:10px">Redeemed Amount</div><div class="abs" style="left:-269px;top:-372px;width:0;height:0"><svg class="abs" style="left:1402.3px;top:384px;width:8.4px;height:15px" viewBox="0 0 8.4 15"><path d="M4.2 0L8.4 6.8H0zM0 8.2h8.4L4.2 15z" fill="#dddddd"/></svg><span class="abs sa" style="left:1393.4px;top:379.2px">↑</span><span class="abs sa" style="left:1400.6px;top:381.3px">↓</span></div>
<div class="abs th" style="left:1166px;top:10px">Tax</div><div class="abs" style="left:-269px;top:-372px;width:0;height:0"><svg class="abs" style="left:1491.3px;top:384px;width:8.4px;height:15px" viewBox="0 0 8.4 15"><path d="M4.2 0L8.4 6.8H0zM0 8.2h8.4L4.2 15z" fill="#dddddd"/></svg><span class="abs sa" style="left:1482.4px;top:379.2px">↑</span><span class="abs sa" style="left:1489.6px;top:381.3px">↓</span></div>
<div class="abs th" style="left:1255px;top:10px">Total (Inc. tax)</div><div class="abs" style="left:-269px;top:-372px;width:0;height:0"><svg class="abs" style="left:1669.3px;top:384px;width:8.4px;height:15px" viewBox="0 0 8.4 15"><path d="M4.2 0L8.4 6.8H0zM0 8.2h8.4L4.2 15z" fill="#dddddd"/></svg><span class="abs sa" style="left:1660.4px;top:379.2px">↑</span><span class="abs sa" style="left:1667.6px;top:381.3px">↓</span></div>
<div class="abs th" style="left:1432px;top:10px">Payment Method</div><div class="abs" style="left:-269px;top:-372px;width:0;height:0"><svg class="abs" style="left:1869.9px;top:384px;width:8.4px;height:15px" viewBox="0 0 8.4 15"><path d="M4.2 0L8.4 6.8H0zM0 8.2h8.4L4.2 15z" fill="#dddddd"/></svg><span class="abs sa" style="left:1861px;top:379.2px">↑</span><span class="abs sa" style="left:1868.2px;top:381.3px">↓</span></div>
</div>
<div class="abs" id="thline"></div>
<div class="abs row o" style="top:413px"><span class="abs td" style="left:10px;top:8px">CO0001</span><span class="abs td" style="left:158px;top:8px">Mr Walk in Customer</span><span class="abs td" style="left:351px;top:8px">27075</span><span class="abs td" style="left:505px;top:8px">2026/03/11</span><span class="abs td" style="left:617px;top:8px">Rs 17,910</span><span class="abs td" style="left:801px;top:8px">Rs 0</span><span class="abs td" style="left:937px;top:8px">0</span><span class="abs td" style="left:1157px;top:8px">Rs 0</span><span class="abs td" style="left:1246px;top:8px">Rs 17,910</span><span class="abs td" style="left:1424px;top:8px">Cash</span></div>
<div class="abs row" style="top:449px"><span class="abs td" style="left:10px;top:8px">CO0001</span><span class="abs td" style="left:158px;top:8px">Mr Walk in Customer</span><span class="abs td" style="left:351px;top:8px">27074</span><span class="abs td" style="left:505px;top:8px">2026/03/11</span><span class="abs td" style="left:617px;top:8px">Rs 10,580</span><span class="abs td" style="left:801px;top:8px">Rs 0</span><span class="abs td" style="left:937px;top:8px">0</span><span class="abs td" style="left:1157px;top:8px">Rs 0</span><span class="abs td" style="left:1246px;top:8px">Rs 10,580</span><span class="abs td" style="left:1424px;top:8px">Cash</span></div>
<div class="abs row o" style="top:485px"><span class="abs td" style="left:10px;top:8px">CO0001</span><span class="abs td" style="left:158px;top:8px">Mr Walk in Customer</span><span class="abs td" style="left:351px;top:8px">27073</span><span class="abs td" style="left:505px;top:8px">2026/03/11</span><span class="abs td" style="left:617px;top:8px">Rs 5,500</span><span class="abs td" style="left:801px;top:8px">Rs 0</span><span class="abs td" style="left:937px;top:8px">0</span><span class="abs td" style="left:1157px;top:8px">Rs 0</span><span class="abs td" style="left:1246px;top:8px">Rs 5,500</span><span class="abs td" style="left:1424px;top:8px">Cash</span></div>
<div class="abs row" style="top:521px"><span class="abs td" style="left:10px;top:8px">CO0001</span><span class="abs td" style="left:158px;top:8px">Mr Walk in Customer</span><span class="abs td" style="left:351px;top:8px">27072</span><span class="abs td" style="left:505px;top:8px">2026/03/11</span><span class="abs td" style="left:617px;top:8px">Rs 1,900</span><span class="abs td" style="left:801px;top:8px">Rs 0</span><span class="abs td" style="left:937px;top:8px">0</span><span class="abs td" style="left:1157px;top:8px">Rs 0</span><span class="abs td" style="left:1246px;top:8px">Rs 1,900</span><span class="abs td" style="left:1424px;top:8px">Cash</span></div>
<div class="abs row o" style="top:557px"><span class="abs td" style="left:10px;top:8px">CO0001</span><span class="abs td" style="left:158px;top:8px">Mr Walk in Customer</span><span class="abs td" style="left:351px;top:8px">27071</span><span class="abs td" style="left:505px;top:8px">2026/03/11</span><span class="abs td" style="left:617px;top:8px">Rs 3,300</span><span class="abs td" style="left:801px;top:8px">Rs 0</span><span class="abs td" style="left:937px;top:8px">0</span><span class="abs td" style="left:1157px;top:8px">Rs 0</span><span class="abs td" style="left:1246px;top:8px">Rs 3,300</span><span class="abs td" style="left:1424px;top:8px">Cash</span></div>
<div class="abs row" style="top:593px"><span class="abs td" style="left:10px;top:8px">CO0001</span><span class="abs td" style="left:158px;top:8px">Mr Walk in Customer</span><span class="abs td" style="left:351px;top:8px">27070</span><span class="abs td" style="left:505px;top:8px">2026/03/11</span><span class="abs td" style="left:617px;top:8px">Rs 4,640</span><span class="abs td" style="left:801px;top:8px">Rs 0</span><span class="abs td" style="left:937px;top:8px">0</span><span class="abs td" style="left:1157px;top:8px">Rs 0</span><span class="abs td" style="left:1246px;top:8px">Rs 4,640</span><span class="abs td" style="left:1424px;top:8px">Cash</span></div>
<div class="abs row o" style="top:629px"><span class="abs td" style="left:10px;top:8px">CO0001</span><span class="abs td" style="left:158px;top:8px">Mr Walk in Customer</span><span class="abs td" style="left:351px;top:8px">27069</span><span class="abs td" style="left:505px;top:8px">2026/03/11</span><span class="abs td" style="left:617px;top:8px">Rs 26,300</span><span class="abs td" style="left:801px;top:8px">Rs 0</span><span class="abs td" style="left:937px;top:8px">0</span><span class="abs td" style="left:1157px;top:8px">Rs 0</span><span class="abs td" style="left:1246px;top:8px">Rs 26,300</span><span class="abs td" style="left:1424px;top:8px">Cash</span></div>
<div class="abs row" style="top:665px"><span class="abs td" style="left:10px;top:8px">CO1222</span><span class="abs td" style="left:158px;top:8px">Tyer Point</span><span class="abs td" style="left:351px;top:8px">27068</span><span class="abs td" style="left:505px;top:8px">2026/03/11</span><span class="abs td" style="left:617px;top:8px">Rs 212,000</span><span class="abs td" style="left:801px;top:8px">Rs 0</span><span class="abs td" style="left:937px;top:8px">0</span><span class="abs td" style="left:1157px;top:8px">Rs 0</span><span class="abs td" style="left:1246px;top:8px">Rs 212,000</span></div>
<div class="abs row o" style="top:701px"><span class="abs td" style="left:10px;top:8px">CO0001</span><span class="abs td" style="left:158px;top:8px">Mr Walk in Customer</span><span class="abs td" style="left:351px;top:8px">27067</span><span class="abs td" style="left:505px;top:8px">2026/03/11</span><span class="abs td" style="left:617px;top:8px">Rs 116,600</span><span class="abs td" style="left:801px;top:8px">Rs 0</span><span class="abs td" style="left:937px;top:8px">0</span><span class="abs td" style="left:1157px;top:8px">Rs 0</span><span class="abs td" style="left:1246px;top:8px">Rs 116,600</span><span class="abs td" style="left:1424px;top:8px">Cash</span></div>
<div class="abs row" style="top:737px"><span class="abs td" style="left:10px;top:8px">CO0001</span><span class="abs td" style="left:158px;top:8px">Mr Walk in Customer</span><span class="abs td" style="left:351px;top:8px">27066</span><span class="abs td" style="left:505px;top:8px">2026/03/11</span><span class="abs td" style="left:617px;top:8px">Rs 34,298</span><span class="abs td" style="left:801px;top:8px">Rs 0</span><span class="abs td" style="left:937px;top:8px">0</span><span class="abs td" style="left:1157px;top:8px">Rs 0</span><span class="abs td" style="left:1246px;top:8px">Rs 34,298</span><span class="abs td" style="left:1424px;top:8px">Cash</span></div>
<div class="abs row o" style="top:773px"><span class="abs td" style="left:10px;top:8px">CO0001</span><span class="abs td" style="left:158px;top:8px">Mr Walk in Customer</span><span class="abs td" style="left:351px;top:8px">27065</span><span class="abs td" style="left:505px;top:8px">2026/03/11</span><span class="abs td" style="left:617px;top:8px">Rs 2,800</span><span class="abs td" style="left:801px;top:8px">Rs 0</span><span class="abs td" style="left:937px;top:8px">0</span><span class="abs td" style="left:1157px;top:8px">Rs 0</span><span class="abs td" style="left:1246px;top:8px">Rs 2,800</span><span class="abs td" style="left:1424px;top:8px">Cash</span></div>
<div class="abs row" style="top:809px"><span class="abs td" style="left:10px;top:8px">CO0001</span><span class="abs td" style="left:158px;top:8px">Mr Walk in Customer</span><span class="abs td" style="left:351px;top:8px">27064</span><span class="abs td" style="left:505px;top:8px">2026/03/11</span><span class="abs td" style="left:617px;top:8px">Rs 3,150</span><span class="abs td" style="left:801px;top:8px">Rs 0</span><span class="abs td" style="left:937px;top:8px">0</span><span class="abs td" style="left:1157px;top:8px">Rs 0</span><span class="abs td" style="left:1246px;top:8px">Rs 3,150</span><span class="abs td" style="left:1424px;top:8px">Cash</span></div>
<div class="abs row o" style="top:845px"><span class="abs td" style="left:10px;top:8px">CO0114</span><span class="abs td" style="left:158px;top:8px">shir</span><span class="abs td" style="left:351px;top:8px">27063</span><span class="abs td" style="left:505px;top:8px">2026/03/11</span><span class="abs td" style="left:617px;top:8px">Rs 40,725</span><span class="abs td" style="left:801px;top:8px">Rs 0</span><span class="abs td" style="left:937px;top:8px">0</span><span class="abs td" style="left:1157px;top:8px">Rs 0</span><span class="abs td" style="left:1246px;top:8px">Rs 40,725</span></div>
<div class="abs" id="foot"></div>
<div class="abs ft" style="left:269px;width:607px;font-weight:bold">Total:</div>
<div class="abs ft" style="left:876px;width:184px">Rs 479,703</div>
<div class="abs ft" style="left:1060px;width:136px">Rs 0</div>
<div class="abs ft" style="left:1196px;width:220px">0</div>
<div class="abs ft" style="left:1416px;width:89px">Rs 0</div>
<div class="abs ft" style="left:1505px;width:178px">Rs 479,703</div>
<div class="abs" id="red1"></div>
<div class="abs" id="red2"></div>
<div class="abs" id="sbar"></div>
<div class="abs" id="sthumb"></div>
<div class="abs" id="bottom"></div><div class="abs" style="left:583px;top:932px;width:47px;height:5px;background:#f8f8f8"></div><div class="abs" style="left:1913px;top:934px;width:1px;height:3px;background:#b5b5b5"></div>
<div class="abs" id="bottombox"><svg style="position:absolute;left:230px;top:0;width:24px;height:3px" viewBox="0 0 24 3"><path d="M0 0l4.500 3h1L2 0zM13 0l-4.500 3h-1L11 0z" fill="#7cb342"/><circle cx="20" cy="3" r="1.500" fill="#f66"/></svg></div>
</body>
</html>
